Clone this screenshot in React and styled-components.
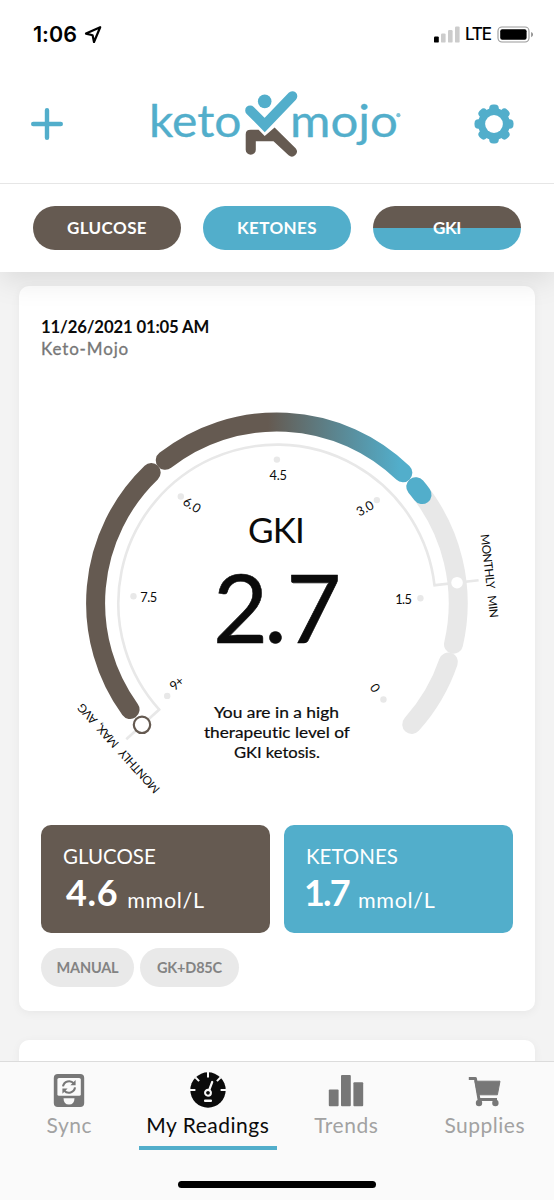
import React from 'react';
import styled, { createGlobalStyle } from 'styled-components';

const BROWN = '#655a51';
const BLUE = '#52aecb';
const TRACK = '#e8e8e8';

const CX = 276.9;
const CY = 603.2;

const polar = (r, deg) => {
  const a = (deg * Math.PI) / 180;
  return [CX + r * Math.cos(a), CY + r * Math.sin(a)];
};

const arc = (r, from, to) => {
  const [x1, y1] = polar(r, from);
  const [x2, y2] = polar(r, to);
  return `M${x1} ${y1}A${r} ${r} 0 ${to - from > 180 ? 1 : 0} 1 ${x2} ${y2}`;
};

const ray = (deg, from, to) => {
  const [x1, y1] = polar(from, deg);
  const [x2, y2] = polar(to, deg);
  return `M${x1} ${y1}L${x2} ${y2}`;
};

const ticks = [
  { label: '9+', dot: 139.8, x: 176.7, y: 683.3, rotate: -42, width: 14 },
  { label: '7.5', dot: 182.8, x: 148.7, y: 597, rotate: 0, width: 17 },
  { label: '6.0', dot: 228, x: 192, y: 505, rotate: 32, width: 18 },
  { label: '4.5', dot: 270, x: 278.3, y: 475.6, rotate: 0, width: 17.5 },
  { label: '3.0', dot: 314.1, x: 365, y: 508.3, rotate: -30, width: 18 },
  { label: '1.5', dot: 358, x: 403.6, y: 599, rotate: 0, width: 16.5 },
  { label: '0', dot: 42.1, x: 375, y: 688, rotate: 55, width: 8 },
];

const PlusIcon = () => (
  <svg width="32" height="32" viewBox="0 0 32 32" aria-hidden>
    <path d="M16 2.2V29.8M2.2 16H29.8" stroke={BLUE} strokeWidth="4.4" strokeLinecap="round" />
  </svg>
);

const GearIcon = () => (
  <svg width="40" height="40" viewBox="-20 -20 40 40" aria-hidden>
    <g fill={BLUE}>
      <circle r="16" />
      {[0, 45, 90, 135, 180, 225, 270, 315].map((a) => (
        <rect key={a} x="-4.8" y="-19.5" width="9.6" height="12" rx="4" transform={`rotate(${a})`} />
      ))}
    </g>
    <circle r="8.9" fill="#fff" />
  </svg>
);

const Logo = () => (
  <svg width="256" height="76" viewBox="148 86 256 76" role="img" aria-label="keto mojo">
    <LogoText x="149" y="136.8" textLength="92.5" lengthAdjust="spacingAndGlyphs">keto</LogoText>
    <LogoText x="290" y="136.8" textLength="108" lengthAdjust="spacingAndGlyphs">mojo</LogoText>
    <circle cx="398.4" cy="115.2" r="2.1" fill={BLUE} opacity="0.75" />
    <circle cx="264.7" cy="101.4" r="6.8" fill={BLUE} />
    <path d="M250.2 110.4L264.7 125L292.3 96.2" fill="none" stroke={BLUE} strokeWidth="10" strokeLinecap="round" />
    <path
      d="M245.7 134.2Q245.7 129.8 250.7 129.8H258.6L264.7 136L274.6 127.4L295.6 148.2A5 5 0 0 1 288.6 155.3L273.5 141.3H255.8V149.8A5 5 0 0 1 245.7 149.8Z"
      fill={BROWN}
    />
  </svg>
);

const Gauge = () => (
  <GaugeSvg viewBox="41 380 472 430">
    <defs>
      <linearGradient id="level" gradientUnits="userSpaceOnUse" x1="268" y1="0" x2="400" y2="0">
        <stop offset="0" stopColor={BROWN} />
        <stop offset="1" stopColor={BLUE} />
      </linearGradient>
    </defs>

    <g fill="none" stroke={TRACK} strokeWidth="2.6">
      <path d={arc(158.6, 137.9, 353.5)} />
      <path d={ray(137.9, 157.4, 203)} />
      <path d={ray(-6.5, 157.4, 203)} />
    </g>

    <g fill="none" strokeWidth="19" strokeLinecap="round">
      <path d={arc(181.3, -40, 13.1)} stroke={TRACK} />
      <path d={arc(181.3, 18.9, 41.95)} stroke={TRACK} />
      <path d={arc(181.3, 144.1, 226.1)} stroke={BROWN} />
      <path d={arc(181.3, 232, 314)} stroke="url(#level)" />
      <path d={arc(181.3, 320, 323.2)} stroke={BLUE} />
    </g>

    <circle cx={polar(181.3, -6.5)[0]} cy={polar(181.3, -6.5)[1]} r="5.8" fill="#fff" />
    <circle cx="142" cy="724.8" r="8.2" fill="#fff" stroke={BROWN} strokeWidth="2.2" />

    {ticks.map(({ label, dot, x, y, rotate, width }) => (
      <g key={label}>
        <circle cx={polar(143.6, dot)[0]} cy={polar(143.6, dot)[1]} r="3.2" fill={TRACK} />
        <GaugeText
          $size={12.8}
          textLength={width}
          transform={`translate(${x} ${y}) rotate(${rotate})`}
          y="4.5"
        >
          {label}
        </GaugeText>
      </g>
    ))}

    <GaugeText $size={11.8} textLength="84" transform="translate(489.6 576) rotate(83.5)" y="4.3">
      MONTHLY&nbsp;&nbsp; MIN
    </GaugeText>
    <GaugeText $size={11.8} textLength="116" transform="translate(118.5 748.5) rotate(-132.1)" y="4.3">
      MONTHLY&nbsp;&nbsp; MAX,&nbsp; AVG
    </GaugeText>

    <GaugeText $size={35} x={CX - 0.5} y="543" textLength="57">GKI</GaugeText>
    <Reading x="213 264.3 286.3" y="642.6">2.7</Reading>

    <GaugeText $size={15.5} x={CX - 0.5} y="718.4" textLength="125" lengthAdjust="spacingAndGlyphs" $stroke={0.2}>
      You are in a high
    </GaugeText>
    <GaugeText $size={15.5} x={CX} y="738.4" textLength="146" lengthAdjust="spacingAndGlyphs" $stroke={0.2}>
      therapeutic level of
    </GaugeText>
    <GaugeText $size={15.5} x={CX} y="758.3" textLength="86" lengthAdjust="spacingAndGlyphs" $stroke={0.2}>
      GKI ketosis.
    </GaugeText>
  </GaugeSvg>
);

const SyncIcon = () => (
  <svg width="36" height="36" viewBox="0 0 36 36" aria-hidden>
    <rect x="2.8" y="2" width="30.4" height="33" rx="4" fill="#777" />
    <rect x="6.4" y="6" width="23.4" height="17.8" rx="1.6" fill="#fafafa" />
    <path d="M12.5 26.2H23.5Q23.3 32.6 18 32.6Q12.7 32.6 12.5 26.2Z" fill="#fafafa" />
    <g fill="none" stroke="#777" strokeWidth="2.1">
      <path d="M12 14.4A6.2 6.2 0 0 1 22.8 11.4" />
      <path d="M24 15.4A6.2 6.2 0 0 1 13.2 18.6" />
    </g>
    <path d="M24.6 8V13.2H19.4ZM11.4 21.8V16.6H16.6Z" fill="#777" />
  </svg>
);

const DialIcon = () => (
  <svg width="36" height="36" viewBox="-18 -18 36 36" aria-hidden>
    <circle r="17.7" fill="#0b0b0b" />
    <g stroke="#fafafa" strokeWidth="2">
      {[-90, -45, 0, 45, 90].map((a) => (
        <path key={a} d="M0 -18V-12.6" transform={`rotate(${a})`} />
      ))}
    </g>
    <path d="M1.2 0L4.2 -8" stroke="#fafafa" strokeWidth="2.2" strokeLinecap="round" />
    <circle cy="2.8" r="2.9" fill="none" stroke="#fafafa" strokeWidth="2.1" />
    <rect x="-4" y="9.6" width="8" height="2.4" rx="1" fill="#fafafa" />
  </svg>
);

const BarsIcon = () => (
  <svg width="36" height="36" viewBox="0 0 36 36" fill="#777" aria-hidden>
    <rect x="0.8" y="17.4" width="9.8" height="16.8" rx="1" />
    <rect x="13" y="3" width="9.8" height="31.2" rx="1" />
    <rect x="25.4" y="10.2" width="9.8" height="24" rx="1" />
  </svg>
);

const CartIcon = () => (
  <svg width="36" height="36" viewBox="0 0 36 36" fill="#777" aria-hidden>
    <path d="M1.8 6.6H8.4L12 27.6H30" fill="none" stroke="#777" strokeWidth="3" strokeLinejoin="round" />
    <path d="M8 9.2H33L30.4 22.8H10.8Z" stroke="#777" strokeLinejoin="round" />
    <circle cx="12" cy="31" r="3.2" />
    <circle cx="28.4" cy="31" r="3.2" />
  </svg>
);

const tabs = [
  { label: 'Sync', icon: <SyncIcon /> },
  { label: 'My Readings', icon: <DialIcon />, active: true },
  { label: 'Trends', icon: <BarsIcon /> },
  { label: 'Supplies', icon: <CartIcon /> },
];

export default function App() {
  return (
    <Screen>
      <GlobalStyle />
      <StatusBar>
        <Clock>
          1:06
          <svg width="19" height="19" viewBox="0 0 19 19" aria-hidden>
            <path d="M16.2 2.2L2 8.6L8.6 10.2L10 17Z" fill="none" stroke="#000" strokeWidth="2.2" strokeLinejoin="round" />
          </svg>
        </Clock>
        <Signal>
          <svg width="26" height="17" viewBox="0 0 26 17" aria-hidden>
            <rect x="0" y="10.4" width="4.8" height="6.2" rx="1.2" />
            <g fill="#ccc">
              <rect x="7" y="7.4" width="4.6" height="9.2" rx="1.2" />
              <rect x="14" y="4" width="4.6" height="12.6" rx="1.2" />
              <rect x="21" y="0.4" width="4.6" height="16.2" rx="1.2" />
            </g>
          </svg>
          <Carrier>LTE</Carrier>
          <svg width="37" height="17" viewBox="0 0 37 17" aria-hidden>
            <rect x="1" y="1" width="31" height="15" rx="4" fill="none" stroke="#999" strokeWidth="1.1" />
            <rect x="3.2" y="3.2" width="26.4" height="10.6" rx="2" />
            <path d="M34.2 6V11.2Q36 10.4 36 8.6T34.2 6Z" fill="#888" />
          </svg>
        </Signal>
      </StatusBar>

      <Header>
        <AddButton aria-label="Add reading"><PlusIcon /></AddButton>
        <Logo />
        <IconButton aria-label="Settings"><GearIcon /></IconButton>
      </Header>

      <Filters>
        <Pill $bg={BROWN} $track={0.4}>GLUCOSE</Pill>
        <Pill $bg={BLUE} $track={0.4}>KETONES</Pill>
        <Pill $bg={`linear-gradient(${BROWN} 51%, ${BLUE} 51%)`} $track={-0.3}>GKI</Pill>
      </Filters>

      <Feed>
        <Card>
          <Taken>11/26/2021 01:05 AM</Taken>
          <Source>Keto-Mojo</Source>
          <Gauge />
          <Tiles>
            <Tile $bg={BROWN}>
              <TileName>GLUCOSE</TileName>
              <TileValue $indent={3} $track={0.6}><b>4.6</b><span>mmol/L</span></TileValue>
            </Tile>
            <Tile $bg={BLUE}>
              <TileName>KETONES</TileName>
              <TileValue $indent={-2} $track={-1.8}><b>1.7</b><span>mmol/L</span></TileValue>
            </Tile>
          </Tiles>
          <Tags>
            <Tag $width={93}>MANUAL</Tag>
            <Tag $width={99}>GK+D85C</Tag>
          </Tags>
        </Card>
        <Card />
      </Feed>

      <TabBar>
        <Tabs>
          {tabs.map(({ label, icon, active }) => (
            <Tab key={label} $active={active}>
              {icon}
              {label}
            </Tab>
          ))}
        </Tabs>
        <HomeIndicator />
      </TabBar>
    </Screen>
  );
}

const GlobalStyle = createGlobalStyle`
  * { box-sizing: border-box; }

  body {
    margin: 0;
    font-family: Lato, "Open Sans", sans-serif;
    font-variant-ligatures: none;
    color: #0b0b0b;
  }

  svg { display: block; flex: none; }
`;

const Screen = styled.div`
  display: flex;
  flex-direction: column;
  width: 554px;
  height: 1200px;
  overflow: hidden;
  background: #f3f3f3;
`;

const StatusBar = styled.div`
  display: flex;
  justify-content: space-between;
  align-items: flex-start;
  height: 66px;
  padding: 25px 20px 0 33px;
  background: #fff;
  font-family: Inter, sans-serif;
  color: #000;
`;

const Clock = styled.div`
  display: flex;
  align-items: center;
  gap: 7px;
  font-size: 21.5px;
  font-weight: 600;
  line-height: 19px;
`;

const Signal = styled.div`
  display: flex;
  align-items: center;
  padding-top: 1px;
`;

const Carrier = styled.span`
  margin: 0 6px 0 5px;
  font-size: 17px;
  font-weight: 500;
  line-height: 17px;
  letter-spacing: -1.1px;
`;

const Header = styled.header`
  position: relative;
  z-index: 2;
  display: flex;
  justify-content: space-between;
  align-items: center;
  height: 118px;
  padding: 0 40px 2px 31px;
  background: #fff;
  border-bottom: 1px solid #e6e6e6;
`;

const IconButton = styled.button`
  padding: 0;
  border: 0;
  background: none;
`;

const AddButton = styled(IconButton)`
  width: 47px;
`;

const LogoText = styled.text`
  font-size: 44px;
  fill: ${BLUE};
  stroke: ${BLUE};
  stroke-width: 0.3px;
  stroke-linejoin: round;
`;

const Filters = styled.nav`
  position: relative;
  z-index: 1;
  display: flex;
  gap: 22px;
  height: 88px;
  padding: 21.5px 33px 0;
  background: #fff;
  box-shadow: 0 8px 28px rgba(0, 0, 0, 0.1);
`;

const Pill = styled.button`
  flex: 1;
  height: 44.5px;
  padding: 0;
  border: 0;
  border-radius: 23px;
  background: ${({ $bg }) => $bg};
  color: #fff;
  font: 700 17px Lato, sans-serif;
  letter-spacing: ${({ $track }) => $track}px;
`;

const Feed = styled.main`
  flex: 1;
  display: flex;
  flex-direction: column;
  gap: 29px;
  min-height: 0;
  padding: 14px 19px 0;
  overflow: hidden;
`;

const Card = styled.section`
  flex: none;
  min-height: 200px;
  padding: 30px 22px 24px;
  border-radius: 10px;
  background: #fff;
  box-shadow: 0 2px 10px rgba(0, 0, 0, 0.05);
`;

const Taken = styled.div`
  font-size: 16.7px;
  font-weight: 700;
  line-height: 22px;
  letter-spacing: -0.15px;
`;

const Source = styled.div`
  font-size: 17px;
  line-height: 22px;
  letter-spacing: 0.85px;
  color: #777;
  -webkit-text-stroke: 0.3px #777;
`;

const GaugeSvg = styled.svg`
  width: 472px;
  height: 430px;
  margin-top: 20px;
`;

const GaugeText = styled.text`
  font-size: ${({ $size }) => $size}px;
  text-anchor: middle;
  fill: #0b0b0b;
  stroke: #0b0b0b;
  stroke-width: ${({ $stroke = 0 }) => $stroke}px;
`;

const Reading = styled.text`
  font-size: 95px;
  fill: #0b0b0b;
  stroke: #0b0b0b;
  stroke-width: 0.6px;
  stroke-linejoin: round;
`;

const Tiles = styled.div`
  display: flex;
  gap: 14px;
  margin-top: 15px;
`;

const Tile = styled.div`
  flex: 1;
  height: 108px;
  padding: 19px 22px 0;
  border-radius: 10px;
  background: ${({ $bg }) => $bg};
  color: #fff;
`;

const TileName = styled.div`
  font-size: 20.5px;
  line-height: 25px;
`;

const TileValue = styled.div`
  display: flex;
  align-items: baseline;
  gap: 9px;
  margin-left: ${({ $indent }) => $indent}px;
  padding-top: 1px;
  font-size: 21.5px;
  line-height: 44px;
  letter-spacing: 0.7px;

  b {
    font-size: 36px;
    letter-spacing: ${({ $track }) => $track}px;
  }

  span { transform: translateY(1.5px); }
`;

const Tags = styled.div`
  display: flex;
  gap: 6px;
  margin-top: 15px;
`;

const Tag = styled.div`
  width: ${({ $width }) => $width}px;
  border-radius: 20px;
  background: #e9e9e9;
  color: #838383;
  font-size: 14.5px;
  font-weight: 700;
  line-height: 39px;
  letter-spacing: -0.2px;
  text-align: center;
`;

const TabBar = styled.footer`
  position: relative;
  z-index: 2;
  display: flex;
  flex-direction: column;
  justify-content: space-between;
  height: 139px;
  padding-bottom: 12px;
  border-top: 1px solid #dcdcdc;
  background: #fafafa;
`;

const Tabs = styled.nav`
  display: flex;
`;

const Tab = styled.a`
  flex: 1;
  display: flex;
  flex-direction: column;
  align-items: center;
  height: 88px;
  padding-top: 10px;
  border-bottom: 4px solid ${({ $active }) => ($active ? BLUE : 'transparent')};
  color: ${({ $active }) => ($active ? '#0b0b0b' : '#a2a2a2')};
  font-size: 21px;
  line-height: 33px;
  letter-spacing: 0.5px;
  white-space: nowrap;
`;

const HomeIndicator = styled.div`
  align-self: center;
  width: 198px;
  height: 7px;
  border-radius: 4px;
  background: #000;
`;
